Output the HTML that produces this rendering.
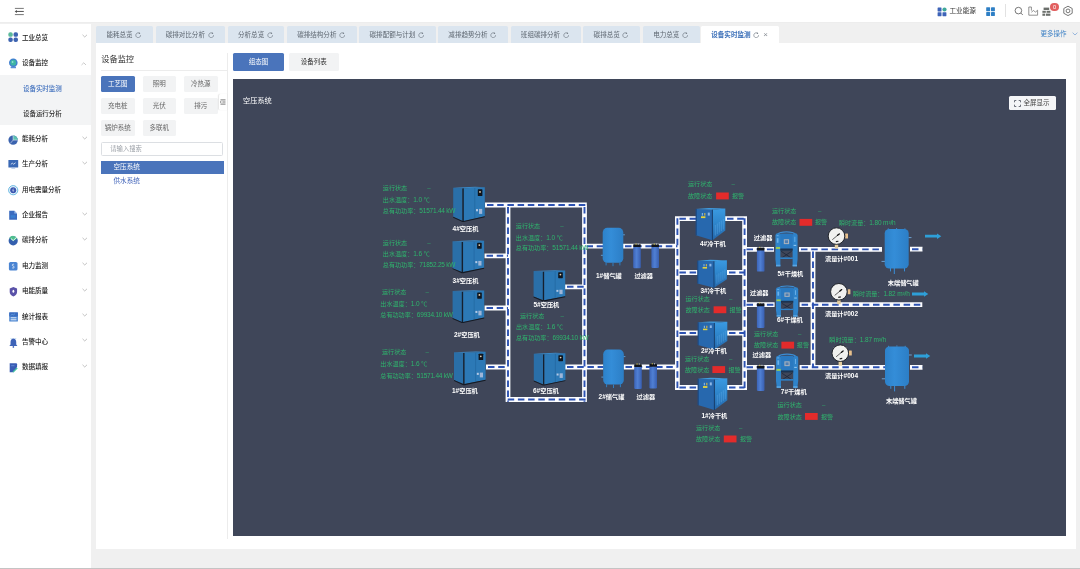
<!DOCTYPE html><html lang="zh"><head><meta charset="utf-8"><title>设备实时监测</title><style>
*{box-sizing:border-box;margin:0;padding:0}
html,body{width:1080px;height:569px;overflow:hidden}
body{background:#f0f0f0;font-family:"Liberation Sans","Noto Sans CJK SC",sans-serif;position:relative;color:#333}
.abs{position:absolute}
#hdr{left:0;top:0;width:1080px;height:22px;background:#fff;box-shadow:0 0.4px 1.2px rgba(0,0,0,.07)}
#side{left:0;top:24.1px;width:91px;height:543.6px;background:#fff}
.mi{position:absolute;left:0;width:91px;height:25.3px}
.mi .t{position:absolute;left:22px;top:0;line-height:25.3px;font-size:6.6px;font-weight:500;color:#222;white-space:nowrap;letter-spacing:-0.1px}
.mi svg.ic{position:absolute;left:7.5px;top:7.8px;width:10.5px;height:10.5px;overflow:visible}
.mi svg.ch{position:absolute;left:81.5px;top:9.6px;width:5.5px;height:4px}
#sub{left:0;top:50.9px;width:91px;height:50.5px;background:#f3f4f5}
.smi{position:absolute;left:23px;font-size:6.5px;font-weight:500;line-height:10px;white-space:nowrap;color:#2b2b2b;letter-spacing:-0.05px}
.tab{position:absolute;top:26px;height:17px;border-radius:1.5px 1.5px 0 0;background:#dbe5ef;font-size:6.55px;line-height:17px;color:#5d6670;white-space:nowrap;text-align:center;padding-right:1px}
.tab svg{display:inline-block;vertical-align:-1.1px;margin-left:2.6px}
#content{left:96px;top:43px;width:980px;height:506px;background:#fff}
.btn{position:absolute;height:16.4px;line-height:16.4px;font-size:6.5px;text-align:center;border-radius:1.5px;background:#f2f3f4;color:#666;white-space:nowrap}
.btn.on{background:#4a74bb;color:#fff}
#canvas{left:233px;top:78.7px;width:833px;height:457.3px;background:#3f4659}
</style></head><body><div id="wrap" style="position:absolute;left:0;top:0;width:1080px;height:569px;will-change:transform">
<div id="hdr" class="abs">
<svg class="abs" style="left:14px;top:7px" width="11" height="9" viewBox="0 0 11 9"><g stroke="#4a4a4a" fill="none"><path d="M0.9 1.4H9.8M0.9 7.6H9.8" stroke-width="0.75"/><path d="M2 4.45H9.8" stroke-width="0.95"/></g><path d="M0.7 4.45L2.9 2.9V6Z" fill="#4a4a4a"/></svg>
<svg class="abs" style="left:937px;top:6.8px" width="11" height="10" viewBox="0 0 11 10"><rect x="0.6" y="0.6" width="3.9" height="3.9" rx="0.4" fill="#3d63b8"/><rect x="0.6" y="5.3" width="3.9" height="3.9" rx="0.4" fill="#3d63b8"/><rect x="5.5" y="5.3" width="3.9" height="3.9" rx="0.4" fill="#3d63b8"/><circle cx="7.5" cy="2.5" r="2.1" fill="#3fa89a"/></svg>
<div class="abs" style="left:949.5px;top:6px;font-size:6.6px;line-height:10px;color:#333;white-space:nowrap">工业能源</div>
<svg class="abs" style="left:986px;top:6.8px" width="10" height="10" viewBox="0 0 10 10"><g fill="#2e7fc5"><rect x="0.2" y="0.3" width="3.9" height="3.9" rx="0.4"/><rect x="0.2" y="5" width="3.9" height="3.9" rx="0.4"/><rect x="5" y="5" width="3.9" height="3.9" rx="0.4"/><rect x="5" y="0.3" width="3.9" height="3.9" rx="0.4"/></g></svg>
<div class="abs" style="left:1005px;top:4.2px;width:0.8px;height:13.3px;background:#e2e2e2"></div>
<svg class="abs" style="left:1013px;top:5px" width="12" height="12" viewBox="0 0 12 12"><g stroke="#555" stroke-width="0.8" fill="none"><circle cx="5.4" cy="5.6" r="3.3"/><path d="M7.8 8L9.8 10"/></g></svg>
<svg class="abs" style="left:1028px;top:5.5px" width="11" height="11" viewBox="0 0 11 11"><g stroke="#777" stroke-width="0.8" fill="none"><path d="M0.8 9.2V1h2.6v3.6"/><path d="M0.8 9.2H9.6V4.2L7.4 6.2 5.6 4.4 3.4 6.2"/></g></svg>
<svg class="abs" style="left:1041.5px;top:6.5px" width="10" height="10" viewBox="0 0 10 10"><g fill="#6b6f6b"><rect x="1.6" y="0.6" width="5.6" height="2.4"/><rect x="0.4" y="3.8" width="3.4" height="2"/><rect x="4.6" y="3.8" width="3.8" height="2"/><rect x="0.4" y="6.6" width="2.6" height="2.2"/><rect x="3.8" y="6.6" width="4.6" height="2.2"/></g></svg>
<div class="abs" style="left:1050.2px;top:2.6px;width:8.8px;height:8.8px;border-radius:50%;background:#e25f5f;color:#fff;font-size:5.6px;line-height:8.8px;text-align:center">0</div>
<svg class="abs" style="left:1062px;top:5px" width="12" height="12" viewBox="0 0 12 12"><g stroke="#555" stroke-width="0.8" fill="none"><path d="M6 1.2L10.2 3.5V8.3L6 10.6L1.8 8.3V3.5Z" stroke-linejoin="round"/><circle cx="6" cy="5.9" r="1.9"/></g></svg>
</div>
<div id="side" class="abs">
<div id="sub" class="abs"></div>
<div class="mi" style="top:0.45px">
<svg class="ic" viewBox="0 0 10.5 10.5"><rect x="0.3" y="0.3" width="4.5" height="4.5" rx="1.9" fill="#5bb99a"/><rect x="5.5" y="0.3" width="4.5" height="4.5" rx="1.9" fill="#3d63b0"/><rect x="0.3" y="5.5" width="4.5" height="4.5" rx="1.9" fill="#3d63b0"/><rect x="5.5" y="5.5" width="4.5" height="4.5" rx="1.9" fill="#3d63b0"/></svg>
<span class="t">工业总览</span>
<svg class="ch" viewBox="0 0 5.5 4"><path d="M0.5 0.8L2.75 3 5 0.8" stroke="#9a9a9a" stroke-width="0.6" fill="none"/></svg>
</div>
<div class="mi" style="top:25.81px">
<svg class="ic" viewBox="0 0 10.5 10.5"><rect x="2.6" y="8.6" width="5.4" height="1.6" rx="0.5" fill="#5a8fd8"/><circle cx="5.3" cy="4.7" r="4.3" fill="#3f7fd0"/><circle cx="5.3" cy="4.7" r="2.9" fill="#3eb5a5"/><circle cx="4.6" cy="4" r="0.9" fill="#8fe0d0"/></svg>
<span class="t">设备监控</span>
<svg class="ch" style="top:12.2px;left:80.6px" viewBox="0 0 5.5 4"><path d="M0.5 3L2.75 0.8 5 3" stroke="#a8a8a8" stroke-width="0.6" fill="none"/></svg>
</div>
<div class="mi" style="top:101.89px">
<svg class="ic" viewBox="0 0 10.5 10.5"><g transform="translate(0.1 0.9)"><circle cx="5" cy="5.2" r="4.7" fill="#3a62ae"/><path d="M5 5.2V0.5A4.7 4.7 0 0 1 9.7 5.2Z" fill="#5cc0b0"/><path d="M5 0.5V5.2H9.7M5 5.2L2.1 8.7" stroke="#fff" stroke-width="0.5" fill="none"/></g></svg>
<span class="t">能耗分析</span>
<svg class="ch" viewBox="0 0 5.5 4"><path d="M0.5 0.8L2.75 3 5 0.8" stroke="#9a9a9a" stroke-width="0.6" fill="none"/></svg>
</div>
<div class="mi" style="top:127.25px">
<svg class="ic" viewBox="0 0 10.5 10.5"><rect x="0.4" y="1" width="9.8" height="7.4" rx="0.5" fill="#3a68b4"/><path d="M2.8 5.4L4.3 4.2 5.6 5.2 7.6 3.8" stroke="#fff" stroke-width="0.7" fill="none"/><rect x="3.4" y="8.9" width="3.8" height="0.7" fill="#9db8e0"/></svg>
<span class="t">生产分析</span>
<svg class="ch" viewBox="0 0 5.5 4"><path d="M0.5 0.8L2.75 3 5 0.8" stroke="#9a9a9a" stroke-width="0.6" fill="none"/></svg>
</div>
<div class="mi" style="top:152.61px">
<svg class="ic" viewBox="0 0 10.5 10.5"><circle cx="5.2" cy="5.2" r="4.6" fill="#e6f4fb" stroke="#4aa8dc" stroke-width="0.8"/><circle cx="5.2" cy="5.2" r="3" fill="#3a56b0"/><path d="M5.6 3.6L4.5 5.4h1.3L5 6.9" stroke="#fff" stroke-width="0.5" fill="none"/></svg>
<span class="t">用电需量分析</span>
</div>
<div class="mi" style="top:177.97px">
<svg class="ic" viewBox="0 0 10.5 10.5"><path d="M1.2 0.8H6.4L9 3.4V9.8H1.2Z" fill="#3b6cc0"/><path d="M6.4 0.8V3.4H9Z" fill="#9bbbe8"/><rect x="2.6" y="5.2" width="4.8" height="2.6" fill="#3a7fd0"/></svg>
<span class="t">企业报告</span>
<svg class="ch" viewBox="0 0 5.5 4"><path d="M0.5 0.8L2.75 3 5 0.8" stroke="#9a9a9a" stroke-width="0.6" fill="none"/></svg>
</div>
<div class="mi" style="top:203.33px">
<svg class="ic" viewBox="0 0 10.5 10.5"><circle cx="5.2" cy="5.8" r="4.6" fill="#345fae"/><path d="M1.2 3.2A4.6 4.6 0 0 1 9.4 3.6L5.4 6Z" fill="#4fbf8e"/><path d="M3 3.6L5.2 5.6 9 1.8" stroke="#fff" stroke-width="0.9" fill="none"/></svg>
<span class="t">碳排分析</span>
<svg class="ch" viewBox="0 0 5.5 4"><path d="M0.5 0.8L2.75 3 5 0.8" stroke="#9a9a9a" stroke-width="0.6" fill="none"/></svg>
</div>
<div class="mi" style="top:228.69px">
<svg class="ic" viewBox="0 0 10.5 10.5"><rect x="0.9" y="0.9" width="8.6" height="8.6" rx="1.6" fill="#4a84d2"/><path d="M6.1 3.6C5.6 3 4.2 3.1 4.3 4.2 4.4 5.2 6.2 4.9 6.2 6.1 6.2 7.2 4.6 7.3 4.1 6.6" stroke="#fff" stroke-width="0.7" fill="none"/></svg>
<span class="t">电力监测</span>
<svg class="ch" viewBox="0 0 5.5 4"><path d="M0.5 0.8L2.75 3 5 0.8" stroke="#9a9a9a" stroke-width="0.6" fill="none"/></svg>
</div>
<div class="mi" style="top:254.05px">
<svg class="ic" viewBox="0 0 10.5 10.5"><g transform="translate(0.6 0.5) scale(0.92 1)"><path d="M5.2 0.6L9.2 1.9V5.4C9.2 7.6 7.4 9.2 5.2 10 3 9.2 1.2 7.6 1.2 5.4V1.9Z" fill="#5a52a8"/><ellipse cx="5.2" cy="4.8" rx="1" ry="1.5" fill="#fff"/></g></svg>
<span class="t">电能质量</span>
<svg class="ch" viewBox="0 0 5.5 4"><path d="M0.5 0.8L2.75 3 5 0.8" stroke="#9a9a9a" stroke-width="0.6" fill="none"/></svg>
</div>
<div class="mi" style="top:279.41px">
<svg class="ic" viewBox="0 0 10.5 10.5"><g transform="translate(0.6 0.5) scale(0.92 1)"><rect x="0.7" y="0.9" width="9.4" height="9.2" rx="0.5" fill="#4a84d0"/><rect x="0.7" y="0.9" width="9.4" height="4" fill="#3a6cc0"/><path d="M2.2 3.8L3.8 2.8 5.2 3.4 7 2.2" stroke="#7fc0f0" stroke-width="0.5" fill="none"/><rect x="2.2" y="5.8" width="6.4" height="1" fill="#e8f0fb"/><rect x="2.2" y="7.8" width="6.4" height="1" fill="#e8f0fb"/></g></svg>
<span class="t">统计报表</span>
<svg class="ch" viewBox="0 0 5.5 4"><path d="M0.5 0.8L2.75 3 5 0.8" stroke="#9a9a9a" stroke-width="0.6" fill="none"/></svg>
</div>
<div class="mi" style="top:304.77px">
<svg class="ic" viewBox="0 0 10.5 10.5"><g transform="translate(0.6 0.5) scale(0.92 1)"><path d="M5.2 1C7.4 1 8.3 2.8 8.3 4.8V7L9.6 8.6H0.8L2.1 7V4.8C2.1 2.8 3 1 5.2 1Z" fill="#3d63b8"/><circle cx="5.2" cy="9.4" r="0.9" fill="#3d63b8"/><path d="M2.3 0.6L3 1.4M8.1 0.6L7.4 1.4" stroke="#3d9bd8" stroke-width="0.5"/></g></svg>
<span class="t">告警中心</span>
<svg class="ch" viewBox="0 0 5.5 4"><path d="M0.5 0.8L2.75 3 5 0.8" stroke="#9a9a9a" stroke-width="0.6" fill="none"/></svg>
</div>
<div class="mi" style="top:330.13px">
<svg class="ic" viewBox="0 0 10.5 10.5"><g transform="translate(0.6 0.5) scale(0.92 1)"><path d="M1.2 0.8H8.2C8.8 0.8 9.2 1.2 9.2 1.8V4.6L5.4 9.8H1.2Z" fill="#3a5cb4"/><path d="M2.8 3.2H6.4" stroke="#7fa8e8" stroke-width="0.6"/><path d="M4.8 9.6L9.4 5.4" stroke="#3fc0a0" stroke-width="1.4"/></g></svg>
<span class="t">数据填报</span>
<svg class="ch" viewBox="0 0 5.5 4"><path d="M0.5 0.8L2.75 3 5 0.8" stroke="#9a9a9a" stroke-width="0.6" fill="none"/></svg>
</div>
<div class="smi" style="top:59.7px;color:#3f6fbd">设备实时监测</div>
<div class="smi" style="top:85.3px">设备运行分析</div>
</div>
<div class="tab" style="left:96.0px;width:57.0px">能耗总览<svg width="6.4" height="6.4" viewBox="0 0 6.4 6.4"><path d="M5.6 3.2A2.4 2.4 0 1 1 4.7 1.35" stroke="#6b747e" stroke-width="0.65" fill="none"/><path d="M4 0.3L5.4 1.5 3.8 2.1Z" fill="#6b747e"/></svg></div>
<div class="tab" style="left:155.5px;width:69.6px">碳排对比分析<svg width="6.4" height="6.4" viewBox="0 0 6.4 6.4"><path d="M5.6 3.2A2.4 2.4 0 1 1 4.7 1.35" stroke="#6b747e" stroke-width="0.65" fill="none"/><path d="M4 0.3L5.4 1.5 3.8 2.1Z" fill="#6b747e"/></svg></div>
<div class="tab" style="left:227.8px;width:56.6px">分析总览<svg width="6.4" height="6.4" viewBox="0 0 6.4 6.4"><path d="M5.6 3.2A2.4 2.4 0 1 1 4.7 1.35" stroke="#6b747e" stroke-width="0.65" fill="none"/><path d="M4 0.3L5.4 1.5 3.8 2.1Z" fill="#6b747e"/></svg></div>
<div class="tab" style="left:286.8px;width:70.0px">碳排结构分析<svg width="6.4" height="6.4" viewBox="0 0 6.4 6.4"><path d="M5.6 3.2A2.4 2.4 0 1 1 4.7 1.35" stroke="#6b747e" stroke-width="0.65" fill="none"/><path d="M4 0.3L5.4 1.5 3.8 2.1Z" fill="#6b747e"/></svg></div>
<div class="tab" style="left:359.3px;width:76.3px">碳排配额与计划<svg width="6.4" height="6.4" viewBox="0 0 6.4 6.4"><path d="M5.6 3.2A2.4 2.4 0 1 1 4.7 1.35" stroke="#6b747e" stroke-width="0.65" fill="none"/><path d="M4 0.3L5.4 1.5 3.8 2.1Z" fill="#6b747e"/></svg></div>
<div class="tab" style="left:438.0px;width:70.0px">减排趋势分析<svg width="6.4" height="6.4" viewBox="0 0 6.4 6.4"><path d="M5.6 3.2A2.4 2.4 0 1 1 4.7 1.35" stroke="#6b747e" stroke-width="0.65" fill="none"/><path d="M4 0.3L5.4 1.5 3.8 2.1Z" fill="#6b747e"/></svg></div>
<div class="tab" style="left:510.5px;width:70.0px">班组碳排分析<svg width="6.4" height="6.4" viewBox="0 0 6.4 6.4"><path d="M5.6 3.2A2.4 2.4 0 1 1 4.7 1.35" stroke="#6b747e" stroke-width="0.65" fill="none"/><path d="M4 0.3L5.4 1.5 3.8 2.1Z" fill="#6b747e"/></svg></div>
<div class="tab" style="left:583.0px;width:57.4px">碳排总览<svg width="6.4" height="6.4" viewBox="0 0 6.4 6.4"><path d="M5.6 3.2A2.4 2.4 0 1 1 4.7 1.35" stroke="#6b747e" stroke-width="0.65" fill="none"/><path d="M4 0.3L5.4 1.5 3.8 2.1Z" fill="#6b747e"/></svg></div>
<div class="tab" style="left:642.6px;width:57.3px">电力总览<svg width="6.4" height="6.4" viewBox="0 0 6.4 6.4"><path d="M5.6 3.2A2.4 2.4 0 1 1 4.7 1.35" stroke="#6b747e" stroke-width="0.65" fill="none"/><path d="M4 0.3L5.4 1.5 3.8 2.1Z" fill="#6b747e"/></svg></div>
<div class="tab" style="left:701.3px;width:77.5px;background:#fff;color:#3a6fb8;font-weight:bold">设备实时监测<svg width="6.4" height="6.4" viewBox="0 0 6.4 6.4"><path d="M5.6 3.2A2.4 2.4 0 1 1 4.7 1.35" stroke="#6b747e" stroke-width="0.65" fill="none"/><path d="M4 0.3L5.4 1.5 3.8 2.1Z" fill="#6b747e"/></svg><span style="color:#8a8f96;font-weight:normal;margin-left:3.6px;font-size:8px;line-height:10px;vertical-align:-0.3px">×</span></div>
<div class="abs" style="left:1040.5px;top:29px;font-size:6.5px;line-height:10px;color:#3a7fc4;white-space:nowrap">更多操作</div>
<svg class="abs" style="left:1071.5px;top:32px" width="6" height="4" viewBox="0 0 6 4"><path d="M0.6 0.7L3 3 5.4 0.7" stroke="#5a8fcc" stroke-width="0.6" fill="none"/></svg>
<div id="content" class="abs"></div>
<div class="abs" style="left:101.3px;top:53px;font-size:8.2px;line-height:13px;color:#333;white-space:nowrap">设备监控</div>
<div class="abs" style="left:101px;top:69.5px;width:126.5px;height:0.7px;background:#ececec"></div>
<div class="abs" style="left:227.2px;top:52.5px;width:0.7px;height:486.5px;background:#ececec"></div>
<div class="btn on" style="left:101.0px;top:76.1px;width:33.6px">工艺图</div>
<div class="btn" style="left:142.5px;top:76.1px;width:33.6px">照明</div>
<div class="btn" style="left:184.0px;top:76.1px;width:33.6px">冷热源</div>
<div class="btn" style="left:101.0px;top:97.6px;width:33.6px">充电桩</div>
<div class="btn" style="left:142.5px;top:97.6px;width:33.6px">光伏</div>
<div class="btn" style="left:184.0px;top:97.6px;width:33.6px">排污</div>
<div class="btn" style="left:101.0px;top:119.8px;width:33.6px">锅炉系统</div>
<div class="btn" style="left:142.5px;top:119.8px;width:33.6px">多联机</div>
<div class="abs" style="left:218.8px;top:93.5px;width:8.6px;height:16.5px;background:#fff;box-shadow:-0.5px 0 1.2px rgba(0,0,0,.10);border-radius:1.5px 0 0 1.5px"></div>
<svg class="abs" style="left:220.3px;top:99px" width="6" height="6" viewBox="0 0 6 6"><path d="M0.5 0.9H5.5M2.4 3H5.5M0.5 5.1H5.5" stroke="#555" stroke-width="0.8"/><path d="M0.3 2L1.7 3 0.3 4Z" fill="#555"/></svg>
<div class="abs" style="left:101.3px;top:141.6px;width:121.8px;height:14px;border:0.7px solid #dcdfe3;border-radius:1.5px;background:#fff;font-size:6.3px;line-height:12.6px;color:#9a9fa6;padding-left:8px;white-space:nowrap">请输入搜索</div>
<div class="abs" style="left:101px;top:160.7px;width:122.8px;height:13px;background:#4a74bb;color:#fff;font-size:6.6px;line-height:12.4px;padding-left:12.5px;white-space:nowrap">空压系统</div>
<div class="abs" style="left:113.5px;top:173.6px;font-size:6.6px;line-height:13px;color:#3f62b8;white-space:nowrap">供水系统</div>
<div class="btn on" style="left:233px;top:53px;width:50.8px;height:18.4px;line-height:18.4px;border-radius:1.5px">组态图</div>
<div class="btn" style="left:288.5px;top:53px;width:50.6px;height:18.4px;line-height:18.4px;color:#333">设备列表</div>
<div id="canvas" class="abs"></div>
<div class="abs" style="left:243px;top:95.3px;font-size:7.2px;line-height:12px;color:#fff;white-space:nowrap">空压系统</div>
<div class="abs" style="left:1009px;top:95.6px;width:47px;height:14.6px;background:#f4f5f7;border-radius:1.5px"></div>
<svg class="abs" style="left:1014.3px;top:99.8px" width="7" height="7" viewBox="0 0 7 7"><path d="M0.5 2.3V0.5H2.3M4.7 0.5H6.5V2.3M6.5 4.7V6.5H4.7M2.3 6.5H0.5V4.7" stroke="#4a4f5a" stroke-width="0.8" fill="none"/></svg>
<div class="abs" style="left:1023.6px;top:97.9px;font-size:6.5px;line-height:10px;color:#444;white-space:nowrap">全屏显示</div>
<svg class="abs" style="left:0;top:0" width="1080" height="569" viewBox="0 0 1080 569" font-family="'Liberation Sans','Noto Sans CJK SC',sans-serif">
<defs>
<linearGradient id="gf" x1="0" x2="1" y1="0" y2="0"><stop offset="0" stop-color="#3c64b8"/><stop offset="0.45" stop-color="#5080d4"/><stop offset="1" stop-color="#385eb0"/></linearGradient>
<linearGradient id="gt" x1="0" x2="1" y1="0" y2="0"><stop offset="0" stop-color="#2d82ca"/><stop offset="0.4" stop-color="#348dd8"/><stop offset="1" stop-color="#2c7ec6"/></linearGradient>
<linearGradient id="gs" x1="0" x2="0" y1="0" y2="1"><stop offset="0" stop-color="#3a9ae2"/><stop offset="0.45" stop-color="#2f86cc"/><stop offset="1" stop-color="#2468ac"/></linearGradient>
<g id="comp"><path d="M0.2 1.4L9.6 2V34.6L0.2 30.4Z" fill="#2a6fa8"/><path d="M9.4 2H11V34.8H9.4Z" fill="#15202e"/><path d="M10.8 2L31.8 0.9V30L10.8 34.6Z" fill="#2c79b6"/><path d="M0.2 30.4L9.6 34.6 10.8 34.6 31.8 30V31L10.8 35.8 9.4 35.8 0.2 31.4Z" fill="#141a24"/><path d="M21.8 1.6V32" stroke="#1d5f96" stroke-width="0.5"/><path d="M0.2 1.4L9.6 2 31.8 0.9 22 0.5Z" fill="#3a8ccc"/><rect x="24.8" y="3" width="4.6" height="6.6" rx="0.5" fill="#10151c"/><circle cx="27" cy="5.6" r="0.9" fill="#e8d2b0"/><rect x="23" y="22.8" width="2" height="2.2" fill="#b4c8e4"/><rect x="26" y="22.6" width="3.2" height="5" fill="#9fb6d8"/></g>
<g id="cdry"><path d="M0 1L16.6 1.7V32.2L0 27.2Z" fill="#2768ae"/><path d="M16.6 1.7L29.5 0.4V22.4L16.6 32.2Z" fill="url(#gs)"/><path d="M0 1L13 0 29.5 0.4 16.6 1.7Z" fill="#3f9ce0"/><path d="M16.6 1.7V32.2" stroke="#143a66" stroke-width="0.9"/><path d="M0.4 1V27.3" stroke="#1a3f74" stroke-width="0.9"/><rect x="5.2" y="8.3" width="4.4" height="1.8" fill="#e6d23c"/><rect x="6" y="5" width="1.2" height="2.6" fill="#7fb0e0"/><rect x="8.4" y="5" width="1.2" height="2.6" fill="#c8b050"/><rect x="12" y="4.6" width="2" height="3" fill="#8fb8e8"/><g stroke="#5aa8e6" stroke-width="0.5"><path d="M19.5 17V27.5M21.5 15.5V26M23.5 14V24.5M25.5 12.5V23M27.5 11V21.5"/></g></g>
<g id="adry"><path d="M2.8 2.4C5 -0.8 18 -0.8 20.2 2.4" stroke="#3c8ed6" stroke-width="1.3" fill="none"/><rect x="4.6" y="1.6" width="13.6" height="14.8" rx="1.5" fill="#2a79c0"/><path d="M0.4 3.4Q0.4 1.4 2.8 1.4T5.4 3.4V32.8H1.2L0.4 26Z" fill="#2f83ca"/><path d="M22.6 3.4Q22.6 1.4 20.2 1.4T17.6 3.4V32.8H21.8L22.6 26Z" fill="#2f83ca"/><rect x="8.8" y="7" width="5.3" height="4.7" fill="#a9b2bc"/><rect x="9.9" y="8" width="3.1" height="2.7" fill="#4f7fb4"/><rect x="5.4" y="15.9" width="12.2" height="2" fill="#1b3350"/><path d="M6.2 18.6L16.6 25.2M16.6 18.6L6.2 25.2" stroke="#182438" stroke-width="0.7"/><rect x="5.2" y="24.4" width="12.6" height="1.5" fill="#2f83ca"/><rect x="0.9" y="14.4" width="4.2" height="1.9" fill="#9ccc54"/><rect x="1.8" y="6" width="1.7" height="4.4" fill="#6cb2ea"/><rect x="1.6" y="3.2" width="2" height="0.9" fill="#6cb2ea"/><rect x="19.4" y="4.6" width="0.9" height="5" fill="#6cb2ea"/><rect x="18.6" y="12.4" width="2.6" height="1.1" fill="#8cc4f0"/><rect x="1" y="31.4" width="4.4" height="1.6" fill="#5aa6e2"/><rect x="17.6" y="31.4" width="4.4" height="1.6" fill="#5aa6e2"/></g>
<g id="filt"><rect x="0" y="2.2" width="7.6" height="21.8" rx="1.2" fill="url(#gf)"/><rect x="0" y="0" width="7.6" height="2.8" rx="0.6" fill="#10141c"/><rect x="2.4" y="-0.8" width="0.9" height="1.2" fill="#e8d23c"/><rect x="4.6" y="-0.8" width="0.9" height="1.2" fill="#c8c8c8"/></g>
<g id="tank"><path d="M3.4 34.5V37.6M10.3 35V38.4M17.2 34.5V37.6" stroke="#2f86cc" stroke-width="0.9"/><path d="M20 7H22.2M-1.8 27.5H0.6" stroke="#6ab0e8" stroke-width="0.8"/><rect x="0" y="0" width="20.6" height="35" rx="4.6" fill="url(#gt)"/></g>
<g id="tankb"><path d="M6.2 39.6V43.4M10 40V46M20.2 39.6V43.4" stroke="#3a8ed8" stroke-width="1"/><path d="M24 9.6H27.2M-2.8 33.4H0.8" stroke="#7ab8ec" stroke-width="0.8"/><path d="M4 1.6V0.4M12.3 1.2V0M20.6 1.6V0.4" stroke="#4a9ce0" stroke-width="0.8"/><rect x="0.4" y="1.1" width="24" height="39.4" rx="4.6" ry="4.2" fill="url(#gt)"/></g>
<g id="gauge"><rect x="-1.7" y="8" width="3.4" height="4.4" fill="#e6cfa0"/><rect x="8.7" y="-2.6" width="2.8" height="5" rx="0.5" fill="#e8c08c"/><circle r="8.3" fill="#f1f1ef" stroke="#15181e" stroke-width="0.9"/><path d="M-4.2 3.6L2.6 -2" stroke="#222" stroke-width="0.7"/><path d="M1 -0.8L2.8 -2.2" stroke="#111" stroke-width="1.3" stroke-linecap="round"/><rect x="-1.6" y="4.8" width="2.6" height="1.2" fill="#222" transform="rotate(-10)"/></g>
<g id="arr"><path d="M0 -1.4H12V-2.7L16.3 0 12 2.7V1.4H0Z" fill="#2e9fd8"/></g>
</defs>
<path d="M485.0 205.0L586.8 205.0 M508.0 205.0L508.0 401.8 M584.5 205.0L584.5 401.8 M505.7 399.5L586.8 399.5 M484.5 255.8L508.0 255.8 M484.5 308.0L508.0 308.0 M486.0 367.0L508.0 367.0 M565.0 286.8L584.5 286.8 M565.0 367.0L603.5 367.0 M584.5 246.2L603.5 246.2 M623.0 246.2L677.4 246.2 M623.5 367.0L677.4 367.0 M677.4 216.3L677.4 389.9 M744.6 216.3L744.6 389.9 M677.4 218.7L697.0 218.7 M725.0 218.7L744.5 218.7 M677.4 272.5L698.0 272.5 M727.0 272.5L744.5 272.5 M677.4 333.0L698.5 333.0 M727.0 333.0L744.5 333.0 M677.4 387.5L698.5 387.5 M727.0 387.5L744.5 387.5 M744.5 249.4L774.0 249.4 M799.0 249.4L882.0 249.4 M744.5 304.7L774.6 304.7 M799.6 304.7L922.3 304.7 M744.5 367.3L774.6 367.3 M799.6 367.3L885.0 367.3 M813.0 249.4L813.0 367.3 M910.0 249.2L922.5 249.2 M910.0 367.3L922.5 367.3" stroke="#fbfcfe" stroke-width="4.8" fill="none"/>
<path d="M485.0 205.0L586.8 205.0 M508.0 205.0L508.0 401.8 M584.5 205.0L584.5 401.8 M505.7 399.5L586.8 399.5 M484.5 255.8L508.0 255.8 M484.5 308.0L508.0 308.0 M486.0 367.0L508.0 367.0 M565.0 286.8L584.5 286.8 M565.0 367.0L603.5 367.0 M584.5 246.2L603.5 246.2 M623.0 246.2L677.4 246.2 M623.5 367.0L677.4 367.0 M677.4 216.3L677.4 389.9 M744.6 216.3L744.6 389.9 M677.4 218.7L697.0 218.7 M725.0 218.7L744.5 218.7 M677.4 272.5L698.0 272.5 M727.0 272.5L744.5 272.5 M677.4 333.0L698.5 333.0 M727.0 333.0L744.5 333.0 M677.4 387.5L698.5 387.5 M727.0 387.5L744.5 387.5 M744.5 249.4L774.0 249.4 M799.0 249.4L882.0 249.4 M744.5 304.7L774.6 304.7 M799.6 304.7L922.3 304.7 M744.5 367.3L774.6 367.3 M799.6 367.3L885.0 367.3 M813.0 249.4L813.0 367.3 M910.0 249.2L922.5 249.2 M910.0 367.3L922.5 367.3" stroke="#2c52b2" stroke-width="1.9" stroke-dasharray="6.5 3.7" stroke-dashoffset="-2" fill="none"/>
<use href="#comp" transform="translate(453.0 186.3) scale(1 1.000)"/>
<use href="#comp" transform="translate(452.3 239.9) scale(1 0.930)"/>
<use href="#comp" transform="translate(452.4 289.7) scale(1 0.930)"/>
<use href="#comp" transform="translate(453.8 350.9) scale(1 0.960)"/>
<use href="#comp" transform="translate(533.4 269.7) scale(1 0.885)"/>
<use href="#comp" transform="translate(533.6 352.4) scale(1 0.925)"/>
<use href="#cdry" transform="translate(695.8 208.0) scale(1 1.000)"/>
<use href="#cdry" transform="translate(697.4 259.8) scale(1 0.870)"/>
<use href="#cdry" transform="translate(697.8 321.4) scale(1 0.870)"/>
<use href="#cdry" transform="translate(697.8 377.8) scale(1 1.000)"/>
<use href="#adry" transform="translate(775.0 231.9) scale(1 1.045)"/>
<use href="#adry" transform="translate(775.6 286.0) scale(1 0.930)"/>
<use href="#adry" transform="translate(775.6 354.2) scale(1 1.020)"/>
<use href="#filt" transform="translate(633.2 244.3) scale(1 1.000)"/>
<use href="#filt" transform="translate(651.4 244.3) scale(1 0.985)"/>
<use href="#filt" transform="translate(634.2 364.2) scale(1 1.030)"/>
<use href="#filt" transform="translate(649.4 364.0) scale(1 1.020)"/>
<use href="#filt" transform="translate(756.9 247.6) scale(1 1.000)"/>
<use href="#filt" transform="translate(756.9 303.3) scale(1 1.030)"/>
<use href="#filt" transform="translate(756.9 365.6) scale(1 1.060)"/>
<use href="#tank" x="602.7" y="227.8"/>
<use href="#tank" x="603.2" y="349.6"/>
<use href="#tankb" x="884.3" y="228.0"/>
<use href="#tankb" x="884.6" y="345.4"/>
<use href="#gauge" x="836.5" y="236.1"/>
<use href="#gauge" x="838.9" y="291.8"/>
<use href="#gauge" x="840.3" y="353.2"/>
<use href="#arr" x="925.0" y="236.2"/>
<use href="#arr" x="912.0" y="294.0"/>
<use href="#arr" x="914.0" y="356.0"/>
<g fill="#fff" font-size="6.2" font-weight="bold">
<text x="452.6" y="230.7"><tspan font-size="6.5">4#</tspan>空压机</text>
<text x="452.6" y="283.0"><tspan font-size="6.5">3#</tspan>空压机</text>
<text x="454.0" y="336.7"><tspan font-size="6.5">2#</tspan>空压机</text>
<text x="452.0" y="393.0"><tspan font-size="6.5">1#</tspan>空压机</text>
<text x="533.5" y="307.2"><tspan font-size="6.5">5#</tspan>空压机</text>
<text x="533.0" y="393.0"><tspan font-size="6.5">6#</tspan>空压机</text>
<text x="596.0" y="277.6"><tspan font-size="6.5">1#</tspan>储气罐</text>
<text x="598.6" y="398.6"><tspan font-size="6.5">2#</tspan>储气罐</text>
<text x="634.4" y="277.6">过滤器</text>
<text x="636.6" y="398.6">过滤器</text>
<text x="700.0" y="246.2"><tspan font-size="6.5">4#</tspan>冷干机</text>
<text x="700.5" y="292.7"><tspan font-size="6.5">3#</tspan>冷干机</text>
<text x="701.0" y="353.3"><tspan font-size="6.5">2#</tspan>冷干机</text>
<text x="701.5" y="417.7"><tspan font-size="6.5">1#</tspan>冷干机</text>
<text x="753.8" y="239.7">过滤器</text>
<text x="750.0" y="294.7">过滤器</text>
<text x="752.6" y="357.2">过滤器</text>
<text x="777.5" y="276.0"><tspan font-size="6.5">5#</tspan>干燥机</text>
<text x="777.0" y="322.2"><tspan font-size="6.5">6#</tspan>干燥机</text>
<text x="780.8" y="394.2"><tspan font-size="6.5">7#</tspan>干燥机</text>
<text x="825.0" y="260.5">流量计<tspan font-size="6.5">#001</tspan></text>
<text x="825.0" y="315.8">流量计<tspan font-size="6.5">#002</tspan></text>
<text x="825.0" y="378.4">流量计<tspan font-size="6.5">#004</tspan></text>
<text x="887.8" y="285.2">末端储气罐</text>
<text x="886.0" y="403.4">末端储气罐</text>
</g>
<g fill="#2fb56d" font-size="6.1">
<text x="382.8" y="190.4">运行状态</text>
<text x="427.3" y="190.4">–</text>
<text x="382.8" y="201.9">出水温度：<tspan font-size="6.5" letter-spacing="-0.1">1.0</tspan> ℃</text>
<text x="382.8" y="213.0">总有功功率：<tspan font-size="6.5" letter-spacing="-0.22">51571.44 kW</tspan></text>
<text x="382.8" y="245.2">运行状态</text>
<text x="427.3" y="245.2">–</text>
<text x="382.8" y="256.0">出水温度：<tspan font-size="6.5" letter-spacing="-0.1">1.6</tspan> ℃</text>
<text x="382.8" y="267.2">总有功功率：<tspan font-size="6.5" letter-spacing="-0.22">71852.25 kW</tspan></text>
<text x="382.0" y="294.0">运行状态</text>
<text x="425.5" y="294.0">–</text>
<text x="380.3" y="305.8">出水温度：<tspan font-size="6.5" letter-spacing="-0.1">1.0</tspan> ℃</text>
<text x="380.3" y="317.2">总有功功率：<tspan font-size="6.5" letter-spacing="-0.22">69934.10 kW</tspan></text>
<text x="382.0" y="354.2">运行状态</text>
<text x="425.5" y="354.2">–</text>
<text x="380.3" y="366.0">出水温度：<tspan font-size="6.5" letter-spacing="-0.1">1.6</tspan> ℃</text>
<text x="380.3" y="378.4">总有功功率：<tspan font-size="6.5" letter-spacing="-0.22">51571.44 kW</tspan></text>
<text x="515.8" y="228.4">运行状态</text>
<text x="560.3" y="228.4">–</text>
<text x="515.8" y="239.7">出水温度：<tspan font-size="6.5" letter-spacing="-0.1">1.0</tspan> ℃</text>
<text x="515.8" y="250.4">总有功功率：<tspan font-size="6.5" letter-spacing="-0.22">51571.44 kW</tspan></text>
<text x="520.0" y="318.4">运行状态</text>
<text x="560.5" y="318.4">–</text>
<text x="516.0" y="329.2">出水温度：<tspan font-size="6.5" letter-spacing="-0.1">1.6</tspan> ℃</text>
<text x="516.0" y="339.7">总有功功率：<tspan font-size="6.5" letter-spacing="-0.22">69934.10 kW</tspan></text>
<text x="688.0" y="186.3">运行状态</text>
<text x="731.5" y="186.3">–</text>
<text x="688.0" y="198.0">故障状态</text>
<rect x="716.1" y="192.5" width="12.7" height="6.9" fill="#e32b2b"/>
<text x="732.0" y="198.0">报警</text>
<text x="685.5" y="301.4">运行状态</text>
<text x="729.0" y="301.4">–</text>
<text x="685.5" y="311.8">故障状态</text>
<rect x="713.6" y="306.3" width="12.7" height="6.9" fill="#e32b2b"/>
<text x="729.5" y="311.8">报警</text>
<text x="685.0" y="361.2">运行状态</text>
<text x="729.0" y="361.2">–</text>
<text x="685.0" y="371.6">故障状态</text>
<rect x="712.4" y="366.1" width="12.7" height="6.9" fill="#e32b2b"/>
<text x="728.5" y="371.6">报警</text>
<text x="696.0" y="430.2">运行状态</text>
<text x="739.0" y="430.2">–</text>
<text x="696.0" y="441.0">故障状态</text>
<rect x="723.8" y="435.5" width="12.7" height="6.9" fill="#e32b2b"/>
<text x="740.0" y="441.0">报警</text>
<text x="772.0" y="213.2">运行状态</text>
<text x="818.0" y="213.2">–</text>
<text x="772.0" y="224.4">故障状态</text>
<rect x="799.5" y="218.9" width="12.7" height="6.9" fill="#e32b2b"/>
<text x="815.0" y="224.4">报警</text>
<text x="754.0" y="336.2">运行状态</text>
<text x="798.0" y="336.2">–</text>
<text x="754.0" y="347.2">故障状态</text>
<rect x="781.4" y="341.7" width="12.7" height="6.9" fill="#e32b2b"/>
<text x="796.8" y="347.2">报警</text>
<text x="777.5" y="406.7">运行状态</text>
<text x="822.0" y="406.7">–</text>
<text x="777.5" y="418.5">故障状态</text>
<rect x="805.0" y="413.0" width="12.7" height="6.9" fill="#e32b2b"/>
<text x="821.0" y="418.5">报警</text>
<text x="838.9" y="225.4">瞬时流量：<tspan font-size="6.5" letter-spacing="-0.14">1.80 m³/h</tspan></text>
<text x="853" y="296.2">瞬时流量：<tspan font-size="6.5" letter-spacing="-0.14">1.82 m³/h</tspan></text>
<text x="829.3" y="341.9">瞬时流量：<tspan font-size="6.5" letter-spacing="-0.14">1.87 m³/h</tspan></text>
</g>
</svg>
<div class="abs" style="left:0;top:567.7px;width:1080px;height:1.3px;background:#c4c4c4"></div>
</div></body></html>
